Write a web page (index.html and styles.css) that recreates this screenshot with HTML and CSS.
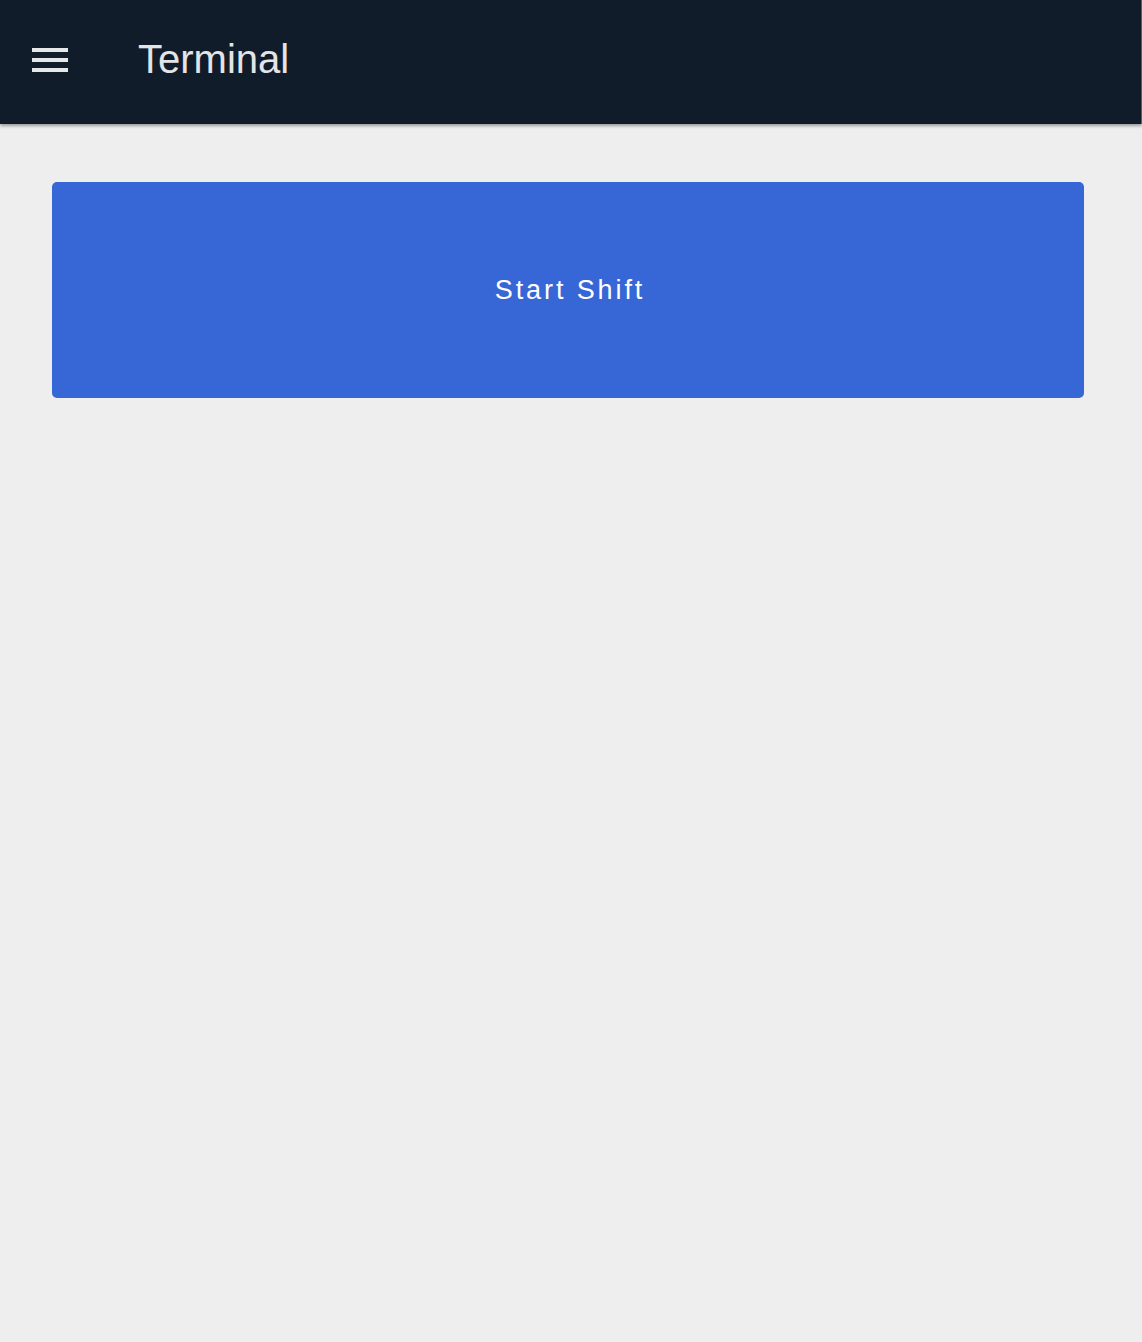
FILE: index.html
```html
<!DOCTYPE html>
<html lang="en">
<head>
<meta charset="utf-8">
<title>Terminal</title>
<link rel="stylesheet" href="styles.css">
</head>
<body>
<header class="app-bar">
  <button class="menu-btn" aria-label="Menu">
    <svg viewBox="0 0 24 24" width="48" height="48"><path fill="currentColor" d="M3 18h18v-2H3v2zm0-5h18v-2H3v2zm0-7v2h18V6H3z"/></svg>
  </button>
  <h1 class="title">Terminal</h1>
</header>
<main class="content">
  <button class="start-btn">Start Shift</button>
</main>
</body>
</html>
```
FILE: styles.css
```css
html, body {
  margin: 0;
  padding: 0;
  height: 100%;
}
body {
  background: #eeeeee;
  font-family: "Liberation Sans", Arial, sans-serif;
}
.app-bar {
  height: 124px;
  background: #111c2b;
  display: flex;
  align-items: center;
  box-shadow: 0 2px 3px rgba(0,0,0,0.35);
  position: relative;
  border-right: 1px solid #5a5f66;
}
.menu-btn {
  background: none;
  border: none;
  padding: 0;
  margin: 0 0 0 26px;
  width: 48px;
  height: 48px;
  color: #e6e7e9;
  display: flex;
  margin-top: -4px;
}
.title {
  margin: 0 0 0 64px;
  font-weight: 400;
  font-size: 40px;
  color: #e3e4e6;
  margin-top: -6px;
}
.content {
  padding: 58px 58px 58px 52px;
}
.start-btn {
  display: block;
  width: 100%;
  height: 216px;
  border: none;
  border-radius: 5px;
  background: #3767d6;
  color: #ffffff;
  font-family: "Liberation Sans", Arial, sans-serif;
  font-size: 27px;
  letter-spacing: 2.9px;
  padding: 0 0 0 4px;
}
```
